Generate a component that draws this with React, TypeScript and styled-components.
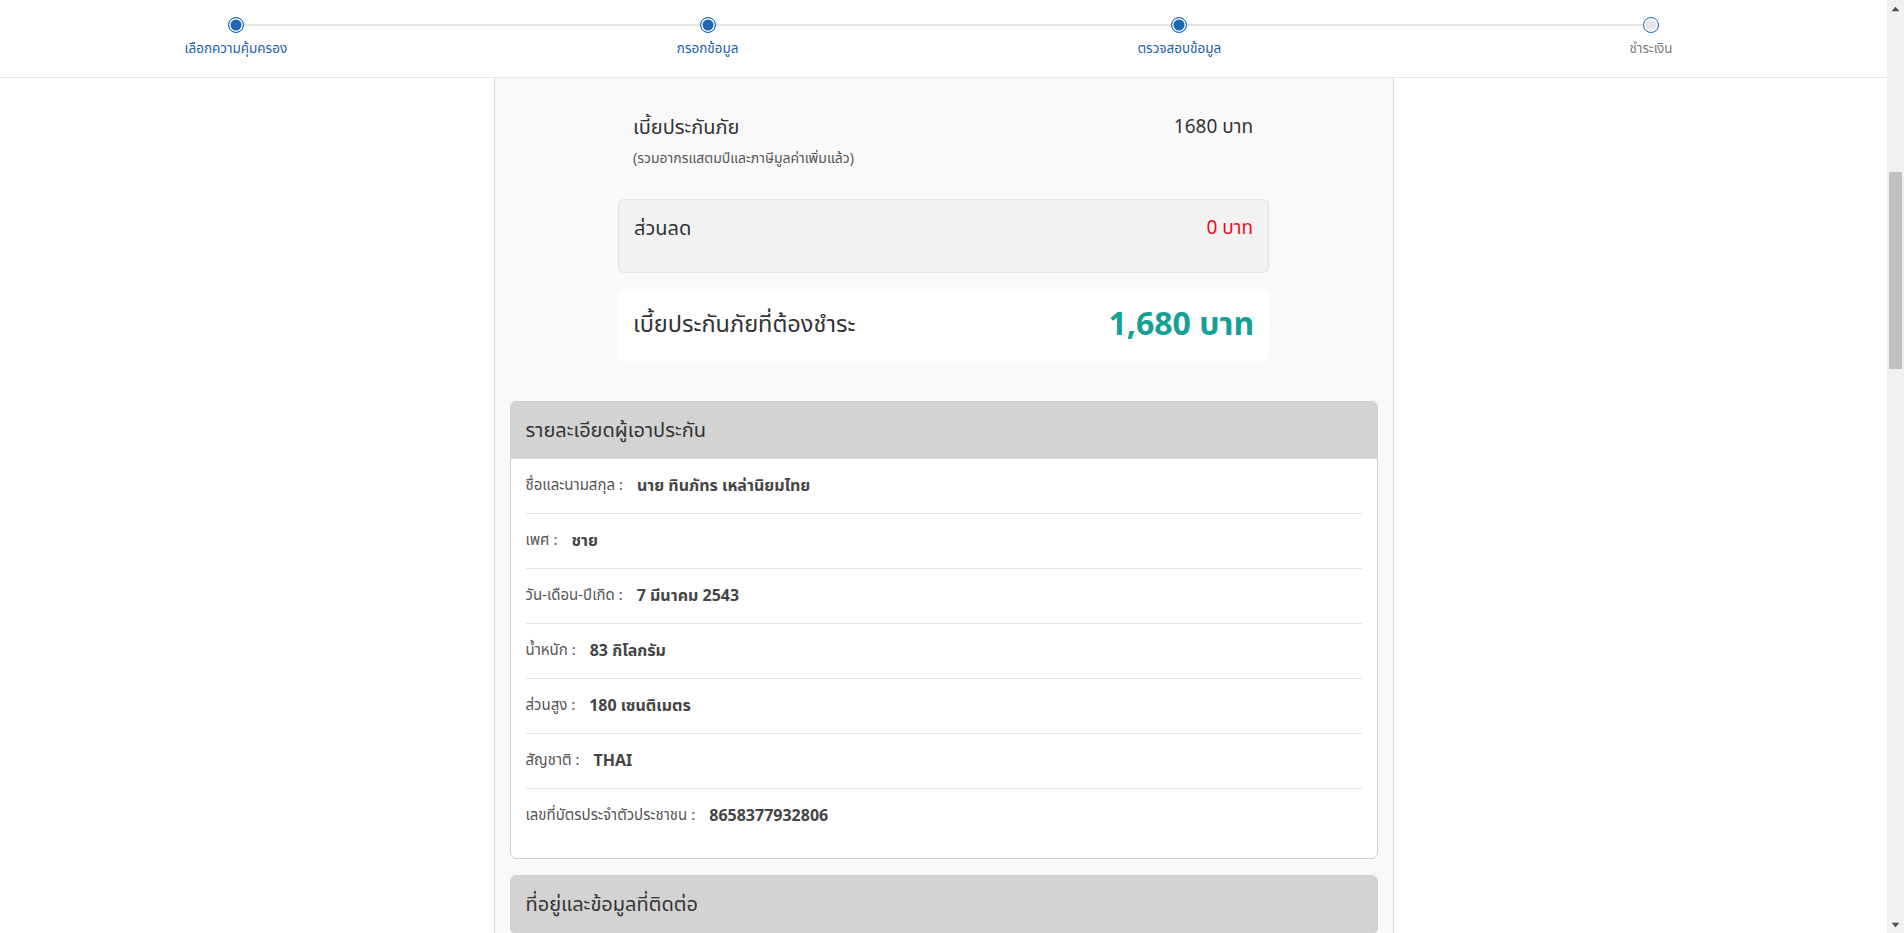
import React from "react";
import styled, { createGlobalStyle } from "styled-components";

const GlobalStyle = createGlobalStyle`
  html, body {
    margin: 0;
    padding: 0;
    background: #ffffff;
    overflow: hidden;
  }
  body {
    font-family: "Noto Sans Thai", "Noto Sans", "Open Sans", sans-serif;
    color: #333333;
  }
  * { box-sizing: border-box; }
`;

const Screen = styled.div`
  height: 100vh;
  display: flex;
  overflow: hidden;
`;

const Page = styled.div`
  flex: 1;
  min-width: 0;
  display: flex;
  flex-direction: column;
  overflow: hidden;
`;

const ScrollBar = styled.div`
  width: 17px;
  flex-shrink: 0;
  display: flex;
  flex-direction: column;
  background: #f1f1f1;
`;

const ScrollButton = styled.div`
  height: 17px;
  display: flex;
  align-items: center;
  justify-content: center;
`;

const ScrollTrack = styled.div`
  flex: 1;
  padding: 155px 2px 0;
`;

const ScrollThumb = styled.div`
  height: 197px;
  background: #c1c1c1;
`;

const Header = styled.header`
  flex-shrink: 0;
  height: 78px;
  background: #ffffff;
  border-bottom: 1px solid #e6e6e6;
`;

const Steps = styled.ol`
  position: relative;
  margin: 0;
  padding: 0;
  list-style: none;
  display: grid;
  grid-template-columns: repeat(4, 1fr);
  &::before {
    content: "";
    position: absolute;
    top: 24px;
    left: 12.5%;
    right: 12.5%;
    height: 2px;
    background: #e4e4e4;
  }
`;

const Step = styled.li`
  position: relative;
  display: flex;
  flex-direction: column;
  align-items: center;
  padding-top: 17px;
  gap: 7px;
`;

const Dot = styled.span<{ $done: boolean }>`
  width: 16px;
  height: 16px;
  border-radius: 50%;
  border: 1.5px solid #1d68b4;
  background: ${(p) => (p.$done ? "#1d68b4" : "#e6e6e6")};
  box-shadow: inset 0 0 0 1.5px #ffffff;
`;

const StepLabel = styled.span<{ $done: boolean }>`
  font-size: 13.5px;
  line-height: 18px;
  color: ${(p) => (p.$done ? "#2260a8" : "#7a7a7a")};
`;

const Panel = styled.main`
  flex: 1;
  width: 900px;
  align-self: center;
  padding: 38px 15px 0;
  background: #f9f9f9;
  border-left: 1px solid #dddddd;
  border-right: 1px solid #dddddd;
`;

const Summary = styled.section`
  width: 651px;
  margin: 0 auto;
`;

const PremiumRow = styled.div`
  display: flex;
  justify-content: space-between;
  align-items: flex-start;
  padding: 0 16px 0 15px;
`;

const PremiumLabel = styled.div`
  display: flex;
  flex-direction: column;
  gap: 10px;
`;

const MainText = styled.span<{ $size?: number; $color?: string }>`
  font-size: ${(p) => p.$size ?? 20}px;
  line-height: 24px;
  color: ${(p) => p.$color ?? "#333333"};
`;

const Note = styled.span`
  font-size: 14px;
  line-height: 18px;
  color: #555555;
`;

const DiscountBox = styled.div`
  margin-top: 31px;
  display: flex;
  justify-content: space-between;
  padding: 17px 15px 31px;
  background: #f2f2f2;
  border: 1px solid #e2e2e2;
  border-radius: 6px;
`;

const TotalBox = styled.div`
  margin-top: 16px;
  height: 72px;
  display: flex;
  justify-content: space-between;
  align-items: center;
  padding: 0 15px;
  background: #ffffff;
  border-radius: 6px;
`;

const TotalAmount = styled.span`
  font-size: 32px;
  line-height: 38px;
  font-weight: 700;
  color: #15a096;
`;

const Card = styled.section<{ $gap: number }>`
  margin-top: ${(p) => p.$gap}px;
  background: #ffffff;
  border: 1px solid #cccccc;
  border-radius: 6px;
  overflow: hidden;
`;

const CardHeader = styled.h2`
  margin: 0;
  height: 57px;
  display: flex;
  align-items: center;
  padding: 0 15px;
  background: #d3d3d3;
  font-size: 20px;
  font-weight: 400;
  color: #333333;
`;

const CardBody = styled.div`
  padding: 0 15px 15px;
`;

const InfoRow = styled.div`
  height: 55px;
  display: flex;
  align-items: center;
  border-bottom: 1px solid #e4e4e4;
  &:last-child {
    height: 54px;
    border-bottom: none;
  }
`;

const InfoLabel = styled.span`
  font-size: 15px;
  line-height: 20px;
  color: #555555;
  margin-right: 14px;
`;

const InfoValue = styled.span`
  font-size: 16px;
  line-height: 20px;
  color: #444444;
  font-weight: 700;
`;

const steps = [
  { label: "เลือกความคุ้มครอง", done: true },
  { label: "กรอกข้อมูล", done: true },
  { label: "ตรวจสอบข้อมูล", done: true },
  { label: "ชำระเงิน", done: false },
];

const insured = [
  ["ชื่อและนามสกุล", "นาย ทินภัทร เหล่านิยมไทย"],
  ["เพศ", "ชาย"],
  ["วัน-เดือน-ปีเกิด", "7 มีนาคม 2543"],
  ["น้ำหนัก", "83 กิโลกรัม"],
  ["ส่วนสูง", "180 เซนติเมตร"],
  ["สัญชาติ", "THAI"],
  ["เลขที่บัตรประจำตัวประชาชน", "8658377932806"],
];

function Arrow({ down }: { down?: boolean }) {
  return (
    <svg width="9" height="6" viewBox="0 0 9 6" aria-hidden="true">
      <polygon points={down ? "0.5,0.8 8.5,0.8 4.5,5.2" : "0.5,5.2 8.5,5.2 4.5,0.8"} fill="#505050" />
    </svg>
  );
}

export default function App() {
  return (
    <>
      <GlobalStyle />
      <Screen>
        <Page>
          <Header>
            <Steps>
              {steps.map((s) => (
                <Step key={s.label}>
                  <Dot $done={s.done} />
                  <StepLabel $done={s.done}>{s.label}</StepLabel>
                </Step>
              ))}
            </Steps>
          </Header>
          <Panel>
            <Summary>
              <PremiumRow>
                <PremiumLabel>
                  <MainText>เบี้ยประกันภัย</MainText>
                  <Note>(รวมอากรแสตมป์และภาษีมูลค่าเพิ่มแล้ว)</Note>
                </PremiumLabel>
                <MainText $size={19}>1680 บาท</MainText>
              </PremiumRow>
              <DiscountBox>
                <MainText>ส่วนลด</MainText>
                <MainText $size={19} $color="#e8101f">0 บาท</MainText>
              </DiscountBox>
              <TotalBox>
                <MainText $size={23.5}>เบี้ยประกันภัยที่ต้องชำระ</MainText>
                <TotalAmount>1,680 บาท</TotalAmount>
              </TotalBox>
            </Summary>
            <Card $gap={40}>
              <CardHeader>รายละเอียดผู้เอาประกัน</CardHeader>
              <CardBody>
                {insured.map(([k, v]) => (
                  <InfoRow key={k}>
                    <InfoLabel>{k} :</InfoLabel>
                    <InfoValue>{v}</InfoValue>
                  </InfoRow>
                ))}
              </CardBody>
            </Card>
            <Card $gap={16}>
              <CardHeader>ที่อยู่และข้อมูลที่ติดต่อ</CardHeader>
            </Card>
          </Panel>
        </Page>
        <ScrollBar>
          <ScrollButton>
            <Arrow />
          </ScrollButton>
          <ScrollTrack>
            <ScrollThumb />
          </ScrollTrack>
          <ScrollButton>
            <Arrow down />
          </ScrollButton>
        </ScrollBar>
      </Screen>
    </>
  );
}
